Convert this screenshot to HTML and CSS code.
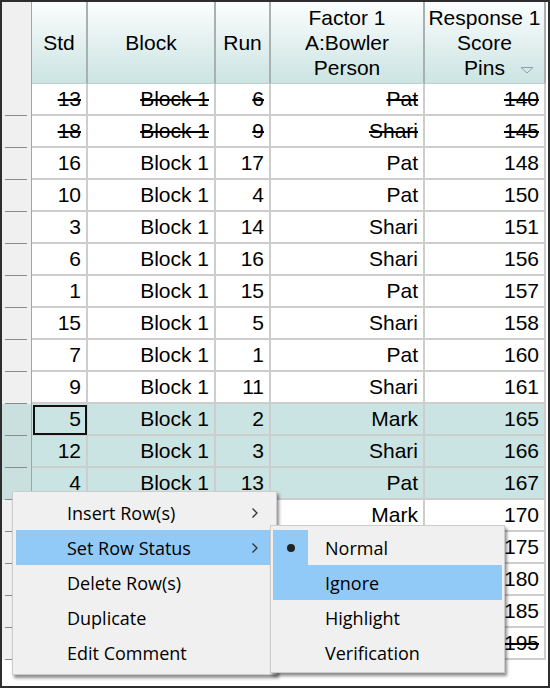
FILE: index.html
```html
<!DOCTYPE html>
<html>
<head>
<meta charset="utf-8">
<link rel="stylesheet" href="styles.css">
</head>
<body>
<div class="frame">
  <div class="grid">
    <div class="hrow">
      <div class="corner"></div>
      <div class="hcell">Std</div>
      <div class="hcell">Block</div>
      <div class="hcell">Run</div>
      <div class="hcell">Factor 1<br>A:Bowler<br>Person</div>
      <div class="hcell sorted">Response 1<br>Score<br>Pins<svg class="sort-icon" width="14" height="8" viewBox="0 0 14 8"><path d="M1 1.5 L13 1.5 L7 7 Z" fill="none" stroke="#8da2a6" stroke-width="1"/></svg></div>
    </div>
    <div class="row ignored"><div class="rh"></div><div class="c">13</div><div class="c">Block 1</div><div class="c">6</div><div class="c">Pat</div><div class="c">140</div></div>
    <div class="row ignored"><div class="rh"></div><div class="c">18</div><div class="c">Block 1</div><div class="c">9</div><div class="c">Shari</div><div class="c">145</div></div>
    <div class="row"><div class="rh"></div><div class="c">16</div><div class="c">Block 1</div><div class="c">17</div><div class="c">Pat</div><div class="c">148</div></div>
    <div class="row"><div class="rh"></div><div class="c">10</div><div class="c">Block 1</div><div class="c">4</div><div class="c">Pat</div><div class="c">150</div></div>
    <div class="row"><div class="rh"></div><div class="c">3</div><div class="c">Block 1</div><div class="c">14</div><div class="c">Shari</div><div class="c">151</div></div>
    <div class="row"><div class="rh"></div><div class="c">6</div><div class="c">Block 1</div><div class="c">16</div><div class="c">Shari</div><div class="c">156</div></div>
    <div class="row"><div class="rh"></div><div class="c">1</div><div class="c">Block 1</div><div class="c">15</div><div class="c">Pat</div><div class="c">157</div></div>
    <div class="row"><div class="rh"></div><div class="c">15</div><div class="c">Block 1</div><div class="c">5</div><div class="c">Shari</div><div class="c">158</div></div>
    <div class="row"><div class="rh"></div><div class="c">7</div><div class="c">Block 1</div><div class="c">1</div><div class="c">Pat</div><div class="c">160</div></div>
    <div class="row"><div class="rh"></div><div class="c">9</div><div class="c">Block 1</div><div class="c">11</div><div class="c">Shari</div><div class="c">161</div></div>
    <div class="row sel"><div class="rh"></div><div class="c focus">5</div><div class="c">Block 1</div><div class="c">2</div><div class="c">Mark</div><div class="c">165</div></div>
    <div class="row sel"><div class="rh"></div><div class="c">12</div><div class="c">Block 1</div><div class="c">3</div><div class="c">Shari</div><div class="c">166</div></div>
    <div class="row sel"><div class="rh"></div><div class="c">4</div><div class="c">Block 1</div><div class="c">13</div><div class="c">Pat</div><div class="c">167</div></div>
    <div class="row"><div class="rh"></div><div class="c"></div><div class="c"></div><div class="c"></div><div class="c">Mark</div><div class="c">170</div></div>
    <div class="row"><div class="rh"></div><div class="c"></div><div class="c"></div><div class="c"></div><div class="c"></div><div class="c">175</div></div>
    <div class="row"><div class="rh"></div><div class="c"></div><div class="c"></div><div class="c"></div><div class="c"></div><div class="c">180</div></div>
    <div class="row"><div class="rh"></div><div class="c"></div><div class="c"></div><div class="c"></div><div class="c"></div><div class="c">185</div></div>
    <div class="row ignored"><div class="rh"></div><div class="c"></div><div class="c"></div><div class="c"></div><div class="c"></div><div class="c">195</div></div>
  </div>

  <div class="menu main-menu">
    <div class="item"><span>Insert Row(s)</span><svg class="chev" width="8" height="12" viewBox="0 0 8 12"><path d="M1.5 1.5 L6 6 L1.5 10.5" fill="none" stroke="#333" stroke-width="1.3"/></svg></div>
    <div class="item active"><span>Set Row Status</span><svg class="chev" width="8" height="12" viewBox="0 0 8 12"><path d="M1.5 1.5 L6 6 L1.5 10.5" fill="none" stroke="#333" stroke-width="1.3"/></svg></div>
    <div class="item"><span>Delete Row(s)</span></div>
    <div class="item"><span>Duplicate</span></div>
    <div class="item"><span>Edit Comment</span></div>
  </div>

  <div class="menu sub-menu">
    <div class="sitem checked"><span class="check"><span class="dot"></span></span><span>Normal</span></div>
    <div class="sitem active"><span class="check"></span><span>Ignore</span></div>
    <div class="sitem"><span class="check"></span><span>Highlight</span></div>
    <div class="sitem"><span class="check"></span><span>Verification</span></div>
  </div>
</div>
</body>
</html>
```

FILE: styles.css
```css
html, body {
  margin: 0;
  padding: 0;
  background: #ffffff;
}

.frame {
  position: relative;
  width: 550px;
  height: 688px;
  box-sizing: border-box;
  border: 2px solid #2e2e2e;
  background: #ffffff;
  overflow: hidden;
  font-family: "Liberation Sans", Arial, sans-serif;
  font-size: 21px;
  color: #000;
}

.grid {
  width: 544px;
}

.hrow,
.row {
  display: grid;
  grid-template-columns: 30px 56px 128px 55px 154px 121px;
}

.hrow {
  height: 82px;
}

.corner {
  background: #f0f0f0;
  border-right: 1px solid #a3a3a3;
}

.hcell {
  position: relative;
  display: flex;
  align-items: center;
  justify-content: center;
  text-align: center;
  line-height: 25px;
  background: linear-gradient(#fbfdfd, #cbe4e2);
  border-right: 2px solid #a8b0b0;
  border-bottom: 1px solid #bcd0cf;
  box-sizing: border-box;
  padding-bottom: 1px;
}

.sort-icon {
  position: absolute;
  right: 10px;
  top: 64px;
}

.row {
  height: 32px;
}

.rh {
  background: linear-gradient(#8a8a8a, #8a8a8a) no-repeat 3px 100% / 22px 1px, #f0f0f0;
  border-right: 1px solid #a3a3a3;
}

.c {
  display: flex;
  align-items: center;
  justify-content: flex-end;
  padding-right: 5px;
  box-sizing: border-box;
  border-right: 2px solid #cdcdcd;
  border-bottom: 2px solid #cdcdcd;
  white-space: nowrap;
  background: #fff;
}

.row.ignored .c {
  text-decoration: line-through;
  text-decoration-thickness: 2px;
}

.row.sel .c {
  background: #c9e4e2;
}

.row.sel .rh {
  background: linear-gradient(#8a8a8a, #8a8a8a) no-repeat 3px 100% / 22px 1px, #c9e0df;
}

.c.focus {
  outline: 2px solid #111;
  outline-offset: -3px;
  background: #d6ecea;
}

/* context menus */
.menu {
  position: absolute;
  background: #f0f0f0;
  border: 1px solid #cccccc;
  box-shadow: 2px 3px 3px rgba(0, 0, 0, 0.45);
  font-family: "Open Sans", "Noto Sans", sans-serif;
  font-size: 18px;
  color: #000;
}

.main-menu {
  left: 10px;
  top: 489px;
  width: 265px;
  box-sizing: border-box;
  padding: 3px 3px 4px 3px;
}

.item {
  height: 35px;
  display: flex;
  align-items: center;
  justify-content: space-between;
  padding-left: 51px;
  padding-right: 14px;
}

.item.active {
  background: #91c9f7;
}

.chev {
  display: block;
}

.sub-menu {
  left: 268px;
  top: 523px;
  width: 235px;
  box-sizing: border-box;
  padding: 4px 2px 2px 2px;
}

.sitem {
  height: 35px;
  display: flex;
  align-items: center;
}

.sitem.active {
  background: #91c9f7;
}

.check {
  width: 35px;
  height: 35px;
  margin-right: 17px;
  display: flex;
  align-items: center;
  justify-content: center;
}

.sitem.checked .check {
  background: #91c9f7;
}

.dot {
  width: 8px;
  height: 8px;
  border-radius: 50%;
  background: #222;
}
```
